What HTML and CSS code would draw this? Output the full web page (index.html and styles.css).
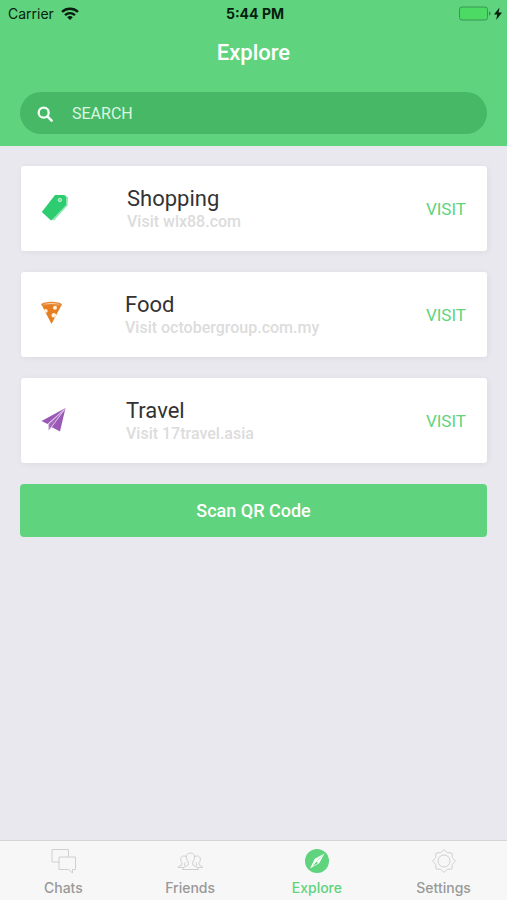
FILE: index.html
```
<!DOCTYPE html>
<html lang="en">
<head>
<meta charset="utf-8">
<meta name="viewport" content="width=device-width, initial-scale=1">
<title>Explore</title>
<link rel="stylesheet" href="styles.css">
</head>
<body>
<header class="header">
  <div class="status">
    <div class="carrier">
      <span>Carrier</span>
      <svg width="18" height="14" viewBox="0 0 18 14" fill="none" stroke="#071e0e" stroke-width="2.4" aria-hidden="true">
        <path d="M1 4.900C5.600.7 12.400.7 17 4.900"/>
        <path d="M4 8.100c3-2.600 7-2.600 10 0"/>
        <path d="M9 13 6.200 10.200c1.600-1.500 4-1.500 5.600 0z" fill="#071e0e" stroke="none"/>
      </svg>
    </div>
    <time class="time">5:44 PM</time>
    <div class="power">
      <svg width="43" height="16" viewBox="0 0 43 16" aria-hidden="true">
        <rect x="0.5" y="1" width="28" height="13" rx="2.5" fill="#4cd964" stroke="#3a9654"/>
        <path d="M30 5.500c2 .5 2 3.500 0 4z" fill="#3a8450"/>
        <path d="M40.500 1.500 35 8.500h3.200l-1 5.500L43 6.500h-3.400z" fill="#071e0e"/>
      </svg>
    </div>
  </div>
  <h1 class="title">Explore</h1>
  <label class="search">
    <svg width="16" height="16" viewBox="0 0 16 16" fill="none" stroke="#f4fff7" aria-hidden="true">
      <circle cx="6.700" cy="6.700" r="5" stroke-width="2.300"/>
      <path d="m10.400 10.400 4.200 4.200" stroke-width="2.600" stroke-linecap="round"/>
    </svg>
    <input class="search-input" type="search" placeholder="SEARCH" aria-label="Search">
  </label>
</header>

<main class="content">
  <article class="card">
    <svg width="28" height="32" viewBox="0 0 28 32" aria-hidden="true">
      <path d="M14.500 2H24l3 2.500-.5 8L13 27.500l-3-1z" fill="#8ce5b0"/>
      <path d="M14 2h9l2 2v8L10 27.500.800 19z" fill="#2ecc71"/>
      <circle cx="18.800" cy="7" r="1.700" fill="#78dda2" stroke="#c3f1d5"/>
    </svg>
    <div class="info">
      <h2 class="name">Shopping</h2>
      <p class="site">Visit wlx88.com</p>
    </div>
    <a class="visit" href="#shopping">VISIT</a>
  </article>
  <article class="card">
    <svg width="26" height="32" viewBox="0 0 26 32" aria-hidden="true">
      <path d="M0 5.500C2 1.800 19 1.800 21 5.500l-1 2.300C15 5.800 7 5.800 2 8z" fill="#e58a3b"/>
      <path d="M2 5.500c4-2 13-2 17 0-5-.8-12-.8-17 0z" fill="#f5c79d"/>
      <path d="M1.500 7.500C7 5.600 15 5.600 19.800 7.500l-9.300 17.500z" fill="#e67e22"/>
      <path d="M3.200 10.500c2-1.500 4.200.2 3.300 2.200-.4 1-1.300 1.200-2 .8z" fill="#fff1df"/>
      <circle cx="14" cy="8.700" r="2" fill="#fff1df"/>
      <path d="m14 18.500-2.700-.3c-1.700-1.200-.6-4.300 1.500-4.200 1.500 0 2.500 1.200 2.300 2.500z" fill="#fff1df"/>
    </svg>
    <div class="info">
      <h2 class="name">Food</h2>
      <p class="site">Visit octobergroup.com.my</p>
    </div>
    <a class="visit" href="#food">VISIT</a>
  </article>
  <article class="card">
    <svg width="27" height="32" viewBox="0 0 27 32" aria-hidden="true">
      <path d="M24.500 3 .5 16l6 3z" fill="#9b59b6"/>
      <path d="M24.500 3 7.300 19l.4 6.500 3.300-4z" fill="#a468bf"/>
      <path d="M24.500 3 19 26.500l-8.500-4.500z" fill="#9b59b6"/>
      <path d="M23.500 4.500 7.300 19l.5 4.500M23.500 4.500 10.500 22l-2.500 3" fill="none" stroke="#e7d3ef" stroke-width="0.8"/>
    </svg>
    <div class="info">
      <h2 class="name">Travel</h2>
      <p class="site">Visit 17travel.asia</p>
    </div>
    <a class="visit" href="#travel">VISIT</a>
  </article>
  <button class="scan" type="button">Scan QR Code</button>
</main>

<nav class="tabs">
  <a class="tab" href="#chats">
    <svg width="26" height="26" viewBox="0 0 26 26" fill="none" stroke="#d0d0d0" aria-hidden="true">
      <path d="M9.500 14H2V1.500h16.500V9"/>
      <path d="M9 9h16.500v12.500h-3V25l-4-3.500H9z"/>
    </svg>
    <span>Chats</span>
  </a>
  <a class="tab" href="#friends">
    <svg width="26" height="26" viewBox="0 0 26 26" fill="none" stroke="#d0d0d0" aria-hidden="true">
      <path d="M13.500 5c-3 0-4.500 2-4 5 .2 1.500.8 2.800 1.700 3.700v3.300L7 19l-1.500 2.500h16L20 19l-4.200-2v-3.300c.9-.9 1.500-2.200 1.700-3.700.5-3-1-5-4-5z"/>
      <path d="M9 8.500C6 6.800 3.200 9 3.700 12c.2 1.200.6 2 1.200 2.600v2.200L1.500 18.500l-.5 1h5M8.500 14.500l-1 .8v2.200M18 8.500c3-1.700 5.800.5 5.300 3.500-.2 1.200-.6 2-1.200 2.600v2.200l3 1.700.5 1H21M18.500 14.500l1 .8v2.200"/>
    </svg>
    <span>Friends</span>
  </a>
  <a class="tab tab-active" href="#explore" aria-current="page">
    <svg width="26" height="26" viewBox="0 0 26 26" aria-hidden="true">
      <circle cx="13" cy="13" r="12" fill="#5fd37d"/>
      <path d="M20.500 5.500 15.200 15.200 6 20.500l4.800-9.700z" fill="#f8fff9"/>
      <path d="m12.500 13.500 1.500 1.500-5.500 3.500z" fill="#5fd37d"/>
      <path d="m19.500 6.500-6.500 6.500" stroke="#a3e5b4" stroke-width="0.7" fill="none"/>
    </svg>
    <span>Explore</span>
  </a>
  <a class="tab" href="#settings">
    <svg width="26" height="26" viewBox="0 0 26 26" fill="none" stroke="#d0d0d0" aria-hidden="true">
      <circle cx="13" cy="13" r="6"/>
      <path d="M11.450 2.950Q13 .5 14.550 2.950Q16.100 5.400 18.950 4.800Q21.800 4.200 21.200 7.050Q20.600 9.900 23.050 11.450Q25.500 13 23.050 14.550Q20.600 16.100 21.200 18.950Q21.800 21.800 18.950 21.200Q16.100 20.600 14.550 23.050Q13 25.500 11.450 23.050Q9.900 20.600 7.050 21.200Q4.200 21.800 4.800 18.950Q5.400 16.100 2.950 14.550Q.5 13 2.950 11.450Q5.400 9.900 4.800 7.050Q4.200 4.200 7.050 4.800Q9.900 5.400 11.450 2.950z"/>
    </svg>
    <span>Settings</span>
  </a>
</nav>
</body>
</html>
```

FILE: styles.css
```
* {
  box-sizing: border-box;
}

body {
  margin: 0;
  min-height: 100vh;
  display: flex;
  flex-direction: column;
  background: #e8e8ee;
  color: #333;
  font-family: Roboto, "Liberation Sans", sans-serif;
}

h1,
h2,
p {
  margin: 0;
  font-weight: 400;
}

a {
  text-decoration: none;
}

svg {
  display: block;
  flex: none;
}

.header {
  padding-bottom: 12px;
  background: #5fd37d;
}

.status {
  display: grid;
  grid-template-columns: 1fr auto 1fr;
  align-items: center;
  height: 28px;
  padding: 0 5px 0 8px;
  color: #071e0e;
  font: 14px/28px Inter, "Liberation Sans", sans-serif;
}

.carrier {
  display: flex;
  align-items: center;
  gap: 7px;
}

.time {
  font-weight: 700;
}

.power {
  display: flex;
  justify-content: flex-end;
}

.title {
  padding: 9px 0 23px;
  color: #fff;
  font-size: 22px;
  line-height: 32px;
  font-weight: 500;
  text-align: center;
}

.search {
  display: flex;
  align-items: center;
  gap: 19px;
  height: 42px;
  margin: 0 20px;
  padding: 2px 17px 0;
  border-radius: 21px;
  background: #47b966;
}

.search-input {
  flex: 1;
  min-width: 0;
  padding: 0;
  border: 0;
  outline: 0;
  background: transparent;
  color: #fff;
  font: 16px/24px Roboto, "Liberation Sans", sans-serif;
}

.search-input::placeholder {
  color: #dcf5e3;
  opacity: 1;
}

.content {
  flex: 1;
  display: flex;
  flex-direction: column;
  gap: 21px;
  padding: 20px;
}

.card {
  display: flex;
  align-items: center;
  height: 85px;
  margin: 0 0 0 1px;
  padding: 0 21px 0 20px;
  border-radius: 3px;
  background: #fff;
  box-shadow: 1px 1px 6px rgba(0, 0, 0, 0.06);
}

.info {
  flex: 1;
  margin-left: 58px;
}

.name {
  font-size: 22px;
  line-height: 26px;
}

.site {
  color: #dcdcdc;
  font-size: 16px;
  line-height: 20px;
  font-weight: 500;
}

.visit {
  color: #5fd37d;
  font-size: 17px;
}

.scan {
  height: 53px;
  border: 0;
  border-radius: 4px;
  background: #5fd37d;
  color: #fff;
  font: 500 18px/24px Roboto, "Liberation Sans", sans-serif;
}

.tabs {
  display: grid;
  grid-template-columns: repeat(4, 1fr);
  height: 60px;
  border-top: 1px solid #d6d6da;
  background: #f7f7f7;
}

.tab {
  display: flex;
  flex-direction: column;
  align-items: center;
  gap: 5px;
  padding-top: 7px;
  color: #999;
  font: 500 14px/18px Inter, "Liberation Sans", sans-serif;
}

.tab-active {
  color: #5fd37d;
}
```
